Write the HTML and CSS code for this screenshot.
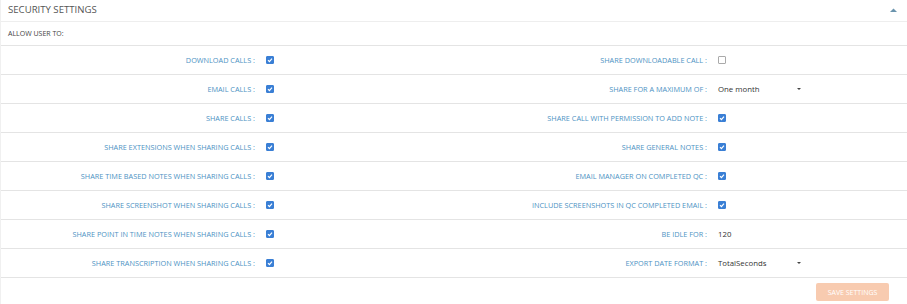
FILE: index.html
```html
<!DOCTYPE html>
<html lang="en">
<head>
  <meta charset="UTF-8">
  <meta name="viewport" content="width=device-width, initial-scale=1.0">
  <title>Security Settings</title>
  <link rel="stylesheet" href="styles.css">
</head>
<body>
  <div class="panel">
    <div class="panel-heading">
      <span class="title">Security Settings</span>
      <svg class="chevron" width="7" height="4" viewBox="0 0 7 4"><path d="M0 4 L3.5 0.5 L7 4 Z" fill="#6a94ad"/></svg>
    </div>
    <div class="allow">Allow user to:</div>

    <div class="settings">
      <div class="row">
        <div class="field"><label>Download calls :</label><input type="checkbox" checked></div>
        <div class="field"><label>Share downloadable call :</label><input type="checkbox"></div>
      </div>
      <div class="row">
        <div class="field"><label>Email calls :</label><input type="checkbox" checked></div>
        <div class="field"><label>Share for a maximum of :</label>
          <div class="select"><span>One month</span><span class="caret"></span></div>
        </div>
      </div>
      <div class="row">
        <div class="field"><label>Share calls :</label><input type="checkbox" checked></div>
        <div class="field"><label>Share call with permission to add note :</label><input type="checkbox" checked></div>
      </div>
      <div class="row">
        <div class="field"><label>Share extensions when sharing calls :</label><input type="checkbox" checked></div>
        <div class="field"><label>Share general notes :</label><input type="checkbox" checked></div>
      </div>
      <div class="row">
        <div class="field"><label>Share time based notes when sharing calls :</label><input type="checkbox" checked></div>
        <div class="field"><label>Email manager on completed QC :</label><input type="checkbox" checked></div>
      </div>
      <div class="row">
        <div class="field"><label>Share screenshot when sharing calls :</label><input type="checkbox" checked></div>
        <div class="field"><label>Include screenshots in QC completed email :</label><input type="checkbox" checked></div>
      </div>
      <div class="row">
        <div class="field"><label>Share point in time notes when sharing calls :</label><input type="checkbox" checked></div>
        <div class="field"><label>Be idle for :</label><input type="text" class="text" value="120"></div>
      </div>
      <div class="row">
        <div class="field"><label>Share transcription when sharing calls :</label><input type="checkbox" checked></div>
        <div class="field"><label>Export date format :</label>
          <div class="select"><span>TotalSeconds</span><span class="caret"></span></div>
        </div>
      </div>
    </div>

    <div class="footer">
      <button class="save" disabled>Save settings</button>
    </div>
  </div>
</body>
</html>
```

FILE: styles.css
```css
:root{
  --label-blue:#4d92c3;
  --line-color:#e4e4e4;
  --text-dark:#333;
  --check-blue:#3a7fd5;
  --save-color:#f8cbb0;
}
*{
  margin:0;
  padding:0;
  box-sizing:border-box;
}
body{
  font-family:"Open Sans",sans-serif;
  background:#fff;
  color:var(--text-dark);
}
.panel{
  width:907px;
  height:304px;
  border-left:1px solid #f0f0f0;
}
.panel-heading{
  height:22px;
  display:flex;
  align-items:center;
  justify-content:space-between;
  padding:0 10px 2px 7px;
  border-bottom:1px solid #eee;
}
.title{
  font-size:9.6px;
  text-transform:uppercase;
  color:#555;
}
.allow{
  height:24px;
  display:flex;
  align-items:center;
  padding-left:7px;
  font-size:7px;
  text-transform:uppercase;
  color:#444;
  border-bottom:1px solid var(--line-color);
}
.row{
  height:29px;
  display:grid;
  grid-template-columns:453px 1fr;
  border-bottom:1px solid var(--line-color);
}
.field{
  display:grid;
  grid-template-columns:254px 1fr;
  column-gap:11px;
  align-items:center;
}
.row .field:last-child{
  grid-template-columns:253px 1fr;
}
label{
  text-align:right;
  font-size:7.3px;
  text-transform:uppercase;
  color:var(--label-blue);
  white-space:nowrap;
}
input[type="checkbox"]{
  appearance:none;
  width:8px;
  height:8px;
  border:1px solid #aaa;
  border-radius:1px;
  background:#fff;
}
input[type="checkbox"]:checked{
  border-color:var(--check-blue);
  background:var(--check-blue) url("data:image/svg+xml;utf8,<svg xmlns='http://www.w3.org/2000/svg' viewBox='0 0 8 8'><path d='M2 4.2 L3.4 5.6 L6 2.6' fill='none' stroke='white' stroke-width='1.2'/></svg>") center/8px 8px no-repeat;
}
.select{
  width:83px;
  display:flex;
  justify-content:space-between;
  align-items:center;
  font-size:7.8px;
}
.caret{
  width:0;
  height:0;
  border-left:2.5px solid transparent;
  border-right:2.5px solid transparent;
  border-top:2.5px solid #444;
}
.text{
  border:none;
  outline:none;
  font-family:inherit;
  font-size:7.8px;
  color:var(--text-dark);
  width:80px;
}
.footer{
  display:flex;
  justify-content:flex-end;
  padding:5px 18px 0 0;
}
.save{
  width:73px;
  height:18px;
  border:none;
  border-radius:2px;
  background:var(--save-color);
  color:#fff;
  font-family:inherit;
  font-size:7px;
  text-transform:uppercase;
}
```
